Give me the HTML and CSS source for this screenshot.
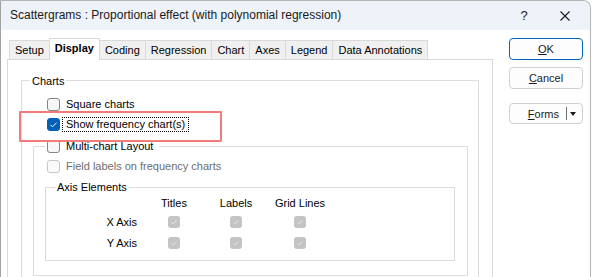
FILE: index.html
```html
<!DOCTYPE html>
<html>
<head>
<meta charset="utf-8">
<link rel="stylesheet" href="styles.css">
</head>
<body>
<div class="window">
  <div class="titlebar">
    <span class="title">Scattergrams : Proportional effect (with polynomial regression)</span>
    <span class="help">?</span>
    <span class="close"><svg width="10" height="10" viewBox="0 0 10 10"><path d="M0.5 0.5L9.5 9.5M9.5 0.5L0.5 9.5" stroke="#1a1a1a" stroke-width="1.1" fill="none"/></svg></span>
  </div>
  <div class="content">
    <div class="tabarea">
      <div class="tabs">
        <div class="tab">Setup</div>
        <div class="tab active">Display</div>
        <div class="tab">Coding</div>
        <div class="tab">Regression</div>
        <div class="tab">Chart</div>
        <div class="tab">Axes</div>
        <div class="tab">Legend</div>
        <div class="tab">Data Annotations</div>
      </div>
      <div class="panel">
        <div class="group charts">
          <div class="group-title">Charts</div>
          <div class="row first">
            <span class="cb"></span><span class="lbl">Square charts</span>
          </div>
          <div class="row">
            <span class="cb checked"><svg width="13" height="13" viewBox="0 0 13 13"><path d="M3.5 6.8L5.5 8.8L9.6 4.6" stroke="#fff" stroke-width="1" fill="none"/></svg></span><span class="lbl focus">Show frequency chart(s)</span>
          </div>
          <div class="group multi">
            <div class="group-title cb-title">
              <span class="cb"></span><span class="lbl">Multi-chart Layout</span>
            </div>
            <div class="row disabled">
              <span class="cb"></span><span class="lbl">Field labels on frequency charts</span>
            </div>
            <div class="group axis">
              <div class="group-title">Axis Elements</div>
              <div class="axis-grid">
                <span></span>
                <span class="head">Titles</span>
                <span class="head">Labels</span>
                <span class="head">Grid Lines</span>
                <span class="rowlbl">X Axis</span>
                <span class="cell"><span class="dcb"><svg width="12" height="12" viewBox="0 0 12 12"><path d="M3.5 6.2L5.2 7.8L8.5 4.6" stroke="#e6e6e6" stroke-width="1" fill="none"/></svg></span></span>
                <span class="cell"><span class="dcb"><svg width="12" height="12" viewBox="0 0 12 12"><path d="M3.5 6.2L5.2 7.8L8.5 4.6" stroke="#e6e6e6" stroke-width="1" fill="none"/></svg></span></span>
                <span class="cell"><span class="dcb"><svg width="12" height="12" viewBox="0 0 12 12"><path d="M3.5 6.2L5.2 7.8L8.5 4.6" stroke="#e6e6e6" stroke-width="1" fill="none"/></svg></span></span>
                <span class="rowlbl">Y Axis</span>
                <span class="cell"><span class="dcb"><svg width="12" height="12" viewBox="0 0 12 12"><path d="M3.5 6.2L5.2 7.8L8.5 4.6" stroke="#e6e6e6" stroke-width="1" fill="none"/></svg></span></span>
                <span class="cell"><span class="dcb"><svg width="12" height="12" viewBox="0 0 12 12"><path d="M3.5 6.2L5.2 7.8L8.5 4.6" stroke="#e6e6e6" stroke-width="1" fill="none"/></svg></span></span>
                <span class="cell"><span class="dcb"><svg width="12" height="12" viewBox="0 0 12 12"><path d="M3.5 6.2L5.2 7.8L8.5 4.6" stroke="#e6e6e6" stroke-width="1" fill="none"/></svg></span></span>
              </div>
            </div>
          </div>
        </div>
      </div>
    </div>
    <div class="buttons">
      <div class="btn default"><span><u>O</u>K</span></div>
      <div class="btn cancel"><span><u>C</u>ancel</span></div>
      <div class="btn forms">
        <span class="forms-text"><u>F</u>orms</span>
        <span class="sep"></span>
        <span class="arrow"></span>
      </div>
    </div>
  </div>
  <div class="highlight"></div>
</div>
</body>
</html>
```

FILE: styles.css
```css
* { box-sizing: border-box; }
html, body { margin: 0; padding: 0; background: #ffffff; }
body {
  font-family: "Liberation Sans", Arial, sans-serif;
  font-size: 11px;
  color: #000;
}
.window {
  position: relative;
  width: 591px;
  height: 277px;
  border: 1px solid #b4b4b4;
  border-left-color: #a2a2a2;
  border-bottom: none;
  border-top-right-radius: 8px;
  overflow: hidden;
  background: #ffffff;
}
.titlebar {
  height: 29px;
  background: #eef2f9;
  display: flex;
  align-items: center;
  padding-left: 9px;
  padding-right: 10px;
}
.title {
  font-size: 12px;
  color: #1a1a1a;
  flex: 1;
  padding-bottom: 1px;
}
.help {
  width: 30px;
  text-align: center;
  font-size: 13px;
  color: #1a1a1a;
  padding-bottom: 1px;
}
.close {
  width: 30px;
  margin-left: 11px;
  display: flex;
  justify-content: center;
  align-items: center;
  height: 12px;
}
.close svg { display: block; }
.content {
  display: flex;
  padding-top: 8px;
}
.tabarea {
  margin-left: 6px;
  width: 486px;
}
.tabs {
  display: flex;
  align-items: flex-end;
  height: 21px;
  padding-left: 2px;
  position: relative;
  z-index: 1;
}
.tab {
  height: 19px;
  border: 1px solid #d9d9d9;
  border-bottom: none;
  background: #f0f0f0;
  padding: 0 5px;
  margin-right: -1px;
  display: flex;
  align-items: center;
  line-height: 13px;
  white-space: nowrap;
}
.tab.active {
  height: 22px;
  margin-bottom: -1px;
  background: #ffffff;
  font-weight: bold;
  padding: 0 5px 2px;
  position: relative;
}
.panel {
  border: 1px solid #d9d9d9;
  background: #ffffff;
  height: 240px;
  padding-top: 20px;
  padding-left: 13px;
}
.group {
  border: 1px solid #dcdcdc;
}
.group-title {
  display: block;
  width: max-content;
  background: #ffffff;
  line-height: 14px;
  height: 14px;
  padding: 0 2px;
}
.charts {
  width: 458px;
  height: 230px;
}
.charts > .group-title {
  margin: -7px 0 0 8px;
}
.row.first { margin-top: 6px; }
.row {
  display: flex;
  align-items: center;
  height: 20px;
  padding-left: 25px;
}
.multi > .row { padding-left: 13px; margin-top: 3px; }
.cb {
  width: 13px;
  height: 13px;
  border: 1px solid #858585;
  border-radius: 3px;
  background: #f7f7f7;
  flex: none;
  margin-right: 2px;
}
.cb svg { display: block; margin: -1px; }
.cb.checked {
  background: #005fb8;
  border-color: #005fb8;
}
.lbl {
  border: 1px dotted transparent;
  padding: 0 3px;
  line-height: 13px;
  white-space: nowrap;
}
.lbl.focus { border-color: #000; }
.disabled .cb { border-color: #c7c7c7; background: #fbfbfb; }
.disabled .lbl { color: #6d6d6d; }
.multi {
  margin: 12px 10px 0 11px;
  width: 435px;
  height: 130px;
}
.cb-title {
  display: flex;
  align-items: center;
  margin: -8px 0 0 11px;
}
.axis {
  margin: 11px 0 0 11px;
  width: 410px;
  height: 74px;
}
.axis > .group-title {
  margin: -8px 0 0 9px;
}
.axis-grid {
  display: grid;
  grid-template-columns: 98px 60px 64px 64px;
  grid-template-rows: 18px 20px 21px;
  align-items: center;
}
.head { text-align: center; }
.rowlbl { text-align: right; padding-right: 7px; }
.cell { display: flex; justify-content: center; }
.dcb {
  width: 12px;
  height: 12px;
  border-radius: 3px;
  background: #c4c4c4;
}
.dcb svg { display: block; }
.buttons {
  margin-left: 16px;
  width: 74px;
  display: flex;
  flex-direction: column;
}
.btn {
  height: 22px;
  border: 1px solid #d0d0d0;
  border-radius: 4px;
  background: #fdfdfd;
  display: flex;
  align-items: center;
  justify-content: center;
  color: #1a1a1a;
}
.btn.default { border-color: #0067c0; }
.btn.cancel { margin-top: 7px; }
.btn.forms {
  margin-top: 14px;
  height: 21px;
  justify-content: flex-end;
  padding-right: 6px;
}
.sep {
  width: 1px;
  height: 13px;
  background: #6f6f6f;
  margin-left: 7px;
}
.arrow {
  width: 0;
  height: 0;
  border-left: 3.5px solid transparent;
  border-right: 3.5px solid transparent;
  border-top: 4px solid #1a1a1a;
  margin-left: 3px;
}
.highlight {
  position: absolute;
  left: 18px;
  top: 110px;
  width: 203px;
  height: 31px;
  border: 2px solid #f27b7b;
  border-radius: 1px;
}
```
